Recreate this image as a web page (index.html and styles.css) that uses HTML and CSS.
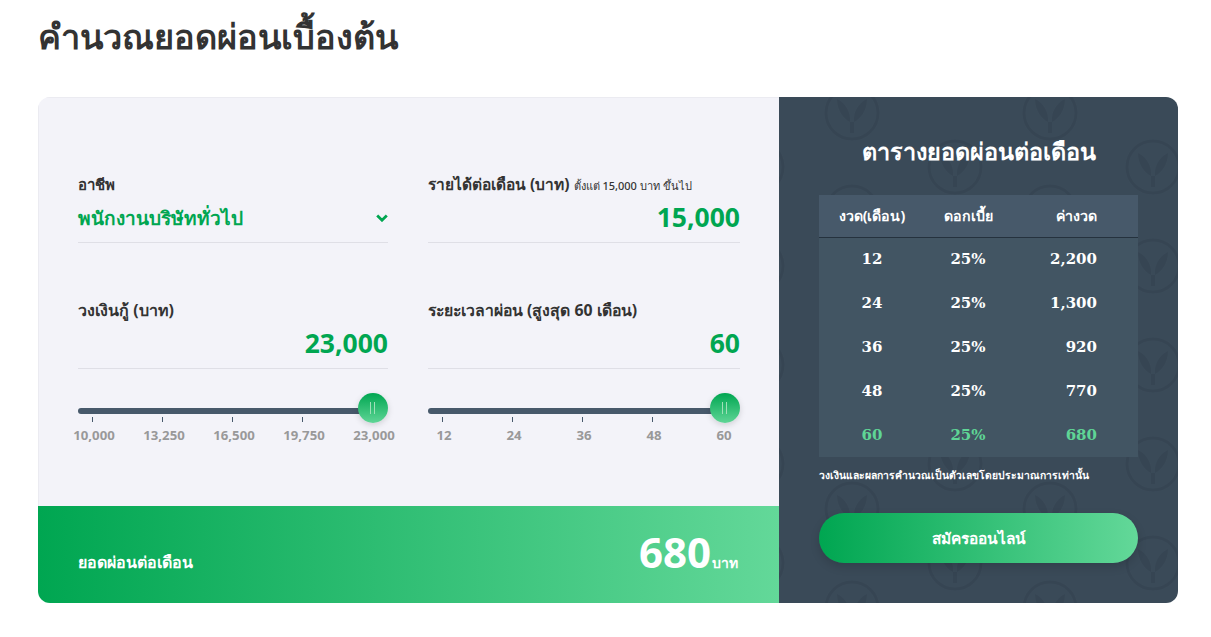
FILE: index.html
```html
<!DOCTYPE html>
<html lang="th">
  <head>
    <meta charset="utf-8"/>
    <meta name="viewport" content="width=device-width, initial-scale=1">
    <link rel="stylesheet" href="styles.css">
  </head>
<body>

<h1 class="page_title">คำนวณยอดผ่อนเบื้องต้น</h1>

<div class="calc">
  <div class="calc_left">
    <div class="fields">
      <div class="field">
        <div class="label label_job">อาชีพ</div>
        <div class="value value_select">
          <span>พนักงานบริษัททั่วไป</span>
          <svg class="chevron" width="12" height="8" viewBox="0 0 12 8"><path d="M1.200 1.500 6 6.200l4.800-4.700" fill="none" stroke="#00a651" stroke-width="2.800"/></svg>
        </div>
      </div>
      <div class="field">
        <div class="label label_income">รายได้ต่อเดือน (บาท) <small>ตั้งแต่ 15,000 บาท ขึ้นไป</small></div>
        <div class="value">15,000</div>
      </div>
      <div class="field">
        <div class="label">วงเงินกู้ (บาท)</div>
        <div class="value">23,000</div>
        <div class="slider">
          <div class="track"></div>
          <div class="thumb"></div>
        </div>
        <div class="scale">
          <span>10,000</span><span>13,250</span><span>16,500</span><span>19,750</span><span>23,000</span>
        </div>
      </div>
      <div class="field">
        <div class="label label_term">ระยะเวลาผ่อน (สูงสุด 60 เดือน)</div>
        <div class="value">60</div>
        <div class="slider">
          <div class="track"></div>
          <div class="thumb"></div>
        </div>
        <div class="scale">
          <span>12</span><span>24</span><span>36</span><span>48</span><span>60</span>
        </div>
      </div>
    </div>
    <div class="result">
      <div class="result_label">ยอดผ่อนต่อเดือน</div>
      <div class="result_value">680<span>บาท</span></div>
    </div>
  </div>

  <div class="calc_right">
    <svg class="watermark" width="100%" height="100%">
      <defs>
        <g id="leaf">
          <circle r="26" fill="none" stroke="#364553" stroke-width="3"/>
          <path d="M-15-14C-15-2-8 6-2 9-1 0-6-10-15-14ZM15-14C15-2 8 6 2 9 1 0 6-10 15-14ZM-2 9h4v11h-4Z" fill="#364553"/>
        </g>
        <pattern id="leaves" width="198" height="99" patternUnits="userSpaceOnUse" x="33" y="-29">
          <use href="#leaf" x="40" y="45"/>
          <use href="#leaf" x="143" y="99"/>
          <use href="#leaf" x="143" y="0"/>
        </pattern>
      </defs>
      <rect width="100%" height="100%" fill="url(#leaves)"/>
    </svg>
    <div class="right_inner">
      <h2 class="table_title">ตารางยอดผ่อนต่อเดือน</h2>
      <table class="rates">
        <thead>
          <tr><th class="col_term">งวด(เดือน)</th><th class="col_rate">ดอกเบี้ย</th><th>ค่างวด</th></tr>
        </thead>
        <tbody>
          <tr><td>12</td><td>25%</td><td>2,200</td></tr>
          <tr><td>24</td><td>25%</td><td>1,300</td></tr>
          <tr><td>36</td><td>25%</td><td>920</td></tr>
          <tr><td>48</td><td>25%</td><td>770</td></tr>
          <tr class="active"><td>60</td><td>25%</td><td>680</td></tr>
        </tbody>
      </table>
      <p class="note">วงเงินและผลการคำนวณเป็นตัวเลขโดยประมาณการเท่านั้น</p>
      <button class="button_main">สมัครออนไลน์</button>
    </div>
  </div>
</div>

</body>
</html>
```

FILE: styles.css
```css
* {
  box-sizing: border-box;
}

body {
  margin: 0;
  padding: 0 33px 0 38px;
  font-family: "Noto Sans", "Noto Sans CJK SC", sans-serif;
  background-color: #fff;
  color: #333;
}

.page_title {
  margin: 0;
  height: 97px;
  padding-top: 14px;
  font-size: 34.3px;
  line-height: 44px;
  font-weight: 700;
}

.calc {
  display: flex;
  height: 506px;
  border-radius: 12px;
  overflow: hidden;
}

.calc_left {
  width: 741px;
  display: flex;
  flex-direction: column;
  background-color: #f3f3f9;
  box-shadow: inset 1px 1px 0 #ebebf1;
}

.fields {
  flex: 1;
  display: grid;
  grid-template-columns: 310px 312px;
  grid-template-rows: 126px 1fr;
  column-gap: 40px;
  padding: 75px 0 0 40px;
}

.label {
  height: 24px;
  font-size: 16px;
  line-height: 24px;
  font-weight: 700;
  color: #333;
}

.label_job {
  font-size: 15px;
}

.label_income {
  font-size: 15.5px;
}

.label_term {
  font-size: 15.8px;
}

.label small {
  font-size: 11px;
  font-weight: 500;
}

.value {
  height: 47px;
  padding: 2px 0 0 0;
  font-size: 26.5px;
  line-height: 38px;
  font-weight: 700;
  color: #00a651;
  text-align: right;
  border-bottom: 1px solid #dfdfe6;
}

.value_select {
  display: flex;
  justify-content: space-between;
  align-items: center;
  padding: 0 0 3px 0;
  font-size: 19px;
  text-align: left;
}

.chevron {
  margin-right: 0;
}

.slider {
  position: relative;
  height: 5px;
  margin-top: 39px;
}

.track {
  height: 6px;
  background-color: #47596b;
  border-radius: 3px;
  margin-right: 15px;
}

.thumb {
  position: absolute;
  right: 0;
  top: -15px;
  width: 30px;
  height: 30px;
  border-radius: 50%;
  background:
    linear-gradient(#9fe0b8, #9fe0b8) 12px 9px / 1px 12px no-repeat,
    linear-gradient(#9fe0b8, #9fe0b8) 16px 9px / 1px 12px no-repeat,
    linear-gradient(#00a651, #5fd596);
  box-shadow: 0 2px 6px rgba(0, 0, 0, 0.15);
}

.scale {
  display: flex;
  gap: 26px;
  margin: 4px -20px 0 -6px;
}

.scale span {
  position: relative;
  width: 44px;
  padding-top: 10px;
  font-size: 13.2px;
  line-height: 17px;
  font-weight: 700;
  color: #999;
  text-align: center;
}

.scale span::before {
  content: "";
  position: absolute;
  top: 0;
  left: 20px;
  width: 1px;
  height: 5px;
  background-color: #47596b;
}

.scale span:last-child::before {
  display: none;
}

.result {
  height: 97px;
  display: flex;
  justify-content: space-between;
  align-items: center;
  padding: 0 41px 0 40px;
  color: #fff;
  background: linear-gradient(90deg, #00a651, #63d899);
}

.result_label {
  font-size: 16px;
  font-weight: 700;
  padding-top: 16px;
}

.result_value {
  font-size: 42px;
  line-height: 57px;
  font-weight: 700;
  padding-top: 5px;
  margin-left: -1px;
}

.result_value span {
  font-size: 14px;
  margin-left: 1px;
}

.calc_right {
  position: relative;
  width: 399px;
  background-color: #3a4a58;
  color: #fff;
}

.watermark {
  position: absolute;
  top: 0;
  left: 0;
}

.right_inner {
  position: relative;
  padding: 0 40px;
}

.table_title {
  margin: 0;
  padding-top: 37px;
  height: 98px;
  font-size: 23.4px;
  line-height: 34px;
  font-weight: 700;
  text-align: center;
}

.rates {
  width: 319px;
  border-collapse: collapse;
  background-color: rgba(68, 86, 101, 0.9);
  table-layout: fixed;
}

.rates th {
  height: 42px;
  font-size: 14.2px;
  font-weight: 700;
  text-align: center;
  background-color: #47596a;
  border-bottom: 1px solid #25323e;
}

.col_term {
  width: 106px;
}

.col_rate {
  width: 86px;
}

.rates td {
  height: 44px;
  font-family: "DejaVu Serif", serif;
  font-size: 15px;
  font-weight: 700;
  text-align: center;
}

.rates th:last-child,
.rates td:last-child {
  text-align: right;
  padding-right: 41px;
}

.active td {
  color: #5fd596;
}

.note {
  margin: 11px 0 0;
  font-size: 10.3px;
  line-height: 14px;
  font-weight: 600;
}

.button_main {
  display: block;
  width: 319px;
  height: 50px;
  margin-top: 31px;
  border: none;
  border-radius: 25px;
  font-family: inherit;
  font-size: 15.4px;
  font-weight: 700;
  color: #fff;
  background: linear-gradient(90deg, #00a651, #63d899);
  box-shadow: 0 4px 10px rgba(0, 0, 0, 0.15);
}
```
